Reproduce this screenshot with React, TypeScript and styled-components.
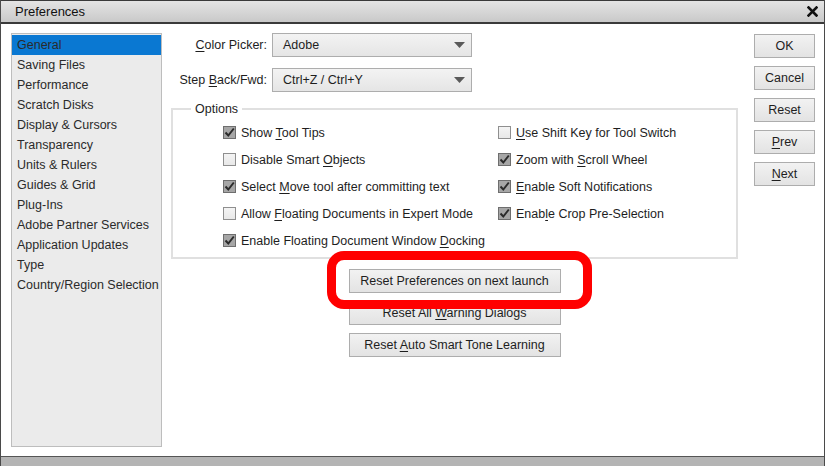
import React from "react";
import styled, { createGlobalStyle } from "styled-components";

const GlobalStyle = createGlobalStyle`
  html, body {
    margin: 0;
    padding: 0;
    background: #ffffff;
  }
  body {
    font-family: "Liberation Sans", Arial, sans-serif;
    font-size: 12px;
    color: #1e1e1e;
  }
  * {
    box-sizing: border-box;
  }
`;

type Item = { label: React.ReactNode; checked: boolean };

const categories = [
  "General",
  "Saving Files",
  "Performance",
  "Scratch Disks",
  "Display & Cursors",
  "Transparency",
  "Units & Rulers",
  "Guides & Grid",
  "Plug-Ins",
  "Adobe Partner Services",
  "Application Updates",
  "Type",
  "Country/Region Selection",
];

const Window = styled.div`
  width: 825px;
  height: 466px;
  display: flex;
  flex-direction: column;
  border-left: 1px solid #4a4a4a;
  border-right: 1px solid #4a4a4a;
  overflow: hidden;
`;

const TitleBar = styled.div`
  height: 24px;
  flex: none;
  display: flex;
  align-items: center;
  justify-content: space-between;
  padding: 0 6px 0 14px;
  background: linear-gradient(#e4e4e4, #c9c9c9);
  border-top: 1px solid #3a3a3a;
  border-bottom: 2px solid #3a3a3a;
  font-size: 13px;
  color: #111;
`;

const CloseIcon = () => (
  <svg width="11" height="11" viewBox="0 0 11 11">
    <path d="M1.5 1.5 L9.5 9.5 M9.5 1.5 L1.5 9.5" stroke="#111" strokeWidth="2.6" strokeLinecap="square" />
  </svg>
);

const Body = styled.div`
  flex: 1;
  display: flex;
  padding: 9px 9px 9px 10px;
  background: #ffffff;
`;

const Sidebar = styled.ul`
  width: 151px;
  flex: none;
  margin: 0;
  padding: 1px 0 0;
  list-style: none;
  background: #ebebeb;
  border: 1px solid #bdbdbd;
`;

const Category = styled.li<{ $active?: boolean }>`
  height: 20px;
  line-height: 20px;
  padding-left: 5px;
  white-space: nowrap;
  font-size: 12.5px;
  color: #2a2a2a;
  background: ${(p) => (p.$active ? "#0a78d2" : "transparent")};
`;

const Main = styled.div`
  width: 567px;
  margin-left: 9px;
  flex: none;
  display: flex;
  flex-direction: column;
`;

const FormGrid = styled.div`
  display: grid;
  grid-template-columns: 96px 200px;
  column-gap: 5px;
  row-gap: 11px;
  align-items: center;
`;

const FieldLabel = styled.span`
  text-align: right;
  font-size: 12.5px;
  white-space: nowrap;
`;

const Select = styled.div`
  height: 24px;
  display: flex;
  align-items: center;
  justify-content: space-between;
  padding: 0 6px 0 10px;
  border: 1px solid #adadad;
  background: linear-gradient(#f3f3f3, #e5e5e5);
  font-size: 12.5px;
`;

const Arrow = () => (
  <svg width="11" height="6" viewBox="0 0 11 6">
    <path d="M0 0 H11 L5.5 6 Z" fill="#5a5a5a" />
  </svg>
);

const Fieldset = styled.fieldset`
  margin: 10px 0 0;
  padding: 0;
  min-width: 0;
  height: 157px;
  border: 2px solid #e0e0e0;
`;

const Legend = styled.legend`
  margin-left: 18px;
  padding: 0 4px;
  font-size: 12.5px;
`;

const OptionColumns = styled.div`
  display: flex;
  padding: 8px 0 0 50px;
`;

const Column = styled.div<{ $width: number }>`
  width: ${(p) => p.$width}px;
  display: flex;
  flex-direction: column;
  gap: 10px;
`;

const CheckRow = styled.label`
  height: 17px;
  display: flex;
  align-items: center;
  gap: 5px;
  font-size: 12.5px;
  white-space: nowrap;
`;

const Box = styled.span<{ $checked: boolean }>`
  width: 13px;
  height: 13px;
  flex: none;
  display: flex;
  align-items: center;
  justify-content: center;
  border: 1px solid ${(p) => (p.$checked ? "#6e6e6e" : "#8f8f8f")};
  background: ${(p) => (p.$checked ? "#a6a6a6" : "linear-gradient(#f4f4f4, #e8e8e8)")};
`;

const Check = () => (
  <svg width="11" height="11" viewBox="0 0 11 11">
    <path d="M1.5 5.5 L4.3 8.5 L9.8 1.5" stroke="#2b2b2b" strokeWidth="2" fill="none" />
  </svg>
);

const AccessKey = styled.u`
  text-decoration: underline;
  text-underline-offset: 2px;
`;

const ResetGroup = styled.div`
  position: relative;
  margin-top: 10px;
  display: flex;
  flex-direction: column;
  align-items: center;
  gap: 8px;
`;

const Button = styled.div<{ $width?: number }>`
  width: ${(p) => p.$width ?? 61}px;
  height: 24px;
  display: flex;
  align-items: center;
  justify-content: center;
  border: 1px solid #adadad;
  background: linear-gradient(#f2f2f2, #e3e3e3);
  font-size: 12.5px;
  white-space: nowrap;
`;

const Highlight = styled.div`
  position: absolute;
  left: 156px;
  top: -18px;
  width: 265px;
  height: 58px;
  border: 9px solid #ff0000;
  border-radius: 17px;
  pointer-events: none;
`;

const ButtonColumn = styled.div`
  margin-left: 16px;
  display: flex;
  flex-direction: column;
  gap: 8px;
  padding-top: 1px;
`;

const BottomStrip = styled.div`
  height: 10px;
  flex: none;
  background: #b4b4b4;
  border-top: 1px solid #555;
`;

const left: Item[] = [
  { label: <>Show <AccessKey>T</AccessKey>ool Tips</>, checked: true },
  { label: <>Disable Smart <AccessKey>O</AccessKey>bjects</>, checked: false },
  { label: <>Select <AccessKey>M</AccessKey>ove tool after committing text</>, checked: true },
  { label: <>Allow <AccessKey>F</AccessKey>loating Documents in Expert Mode</>, checked: false },
  { label: <>Enable Floating Document Window <AccessKey>D</AccessKey>ocking</>, checked: true },
];

const right: Item[] = [
  { label: <><AccessKey>U</AccessKey>se Shift Key for Tool Switch</>, checked: false },
  { label: <>Zoom with <AccessKey>S</AccessKey>croll Wheel</>, checked: true },
  { label: <><AccessKey>E</AccessKey>nable Soft Notifications</>, checked: true },
  { label: <>Enab<AccessKey>l</AccessKey>e Crop Pre-Selection</>, checked: true },
];

const CheckList: React.FC<{ items: Item[]; width: number }> = ({ items, width }) => (
  <Column $width={width}>
    {items.map((item, i) => (
      <CheckRow key={i}>
        <Box $checked={item.checked}>{item.checked && <Check />}</Box>
        <span>{item.label}</span>
      </CheckRow>
    ))}
  </Column>
);

export default function App() {
  return (
    <>
      <GlobalStyle />
      <Window>
        <TitleBar>
          <span>Preferences</span>
          <CloseIcon />
        </TitleBar>
        <Body>
          <Sidebar>
            {categories.map((c, i) => (
              <Category key={c} $active={i === 0}>
                {c}
              </Category>
            ))}
          </Sidebar>
          <Main>
            <FormGrid>
              <FieldLabel>
                <AccessKey>C</AccessKey>olor Picker:
              </FieldLabel>
              <Select>
                <span>Adobe</span>
                <Arrow />
              </Select>
              <FieldLabel>
                Step <AccessKey>B</AccessKey>ack/Fwd:
              </FieldLabel>
              <Select>
                <span>Ctrl+Z / Ctrl+Y</span>
                <Arrow />
              </Select>
            </FormGrid>
            <Fieldset>
              <Legend>Options</Legend>
              <OptionColumns>
                <CheckList items={left} width={275} />
                <CheckList items={right} width={230} />
              </OptionColumns>
            </Fieldset>
            <ResetGroup>
              <Button $width={212}>
                <span>Reset Preferences on next launch</span>
              </Button>
              <Button $width={212}>
                <span>
                  Reset All <AccessKey>W</AccessKey>arning Dialogs
                </span>
              </Button>
              <Button $width={212}>
                <span>
                  Reset <AccessKey>A</AccessKey>uto Smart Tone Learning
                </span>
              </Button>
              <Highlight />
            </ResetGroup>
          </Main>
          <ButtonColumn>
            <Button>OK</Button>
            <Button>Cancel</Button>
            <Button>Reset</Button>
            <Button>
              <span>
                <AccessKey>P</AccessKey>rev
              </span>
            </Button>
            <Button>
              <span>
                <AccessKey>N</AccessKey>ext
              </span>
            </Button>
          </ButtonColumn>
        </Body>
        <BottomStrip />
      </Window>
    </>
  );
}
